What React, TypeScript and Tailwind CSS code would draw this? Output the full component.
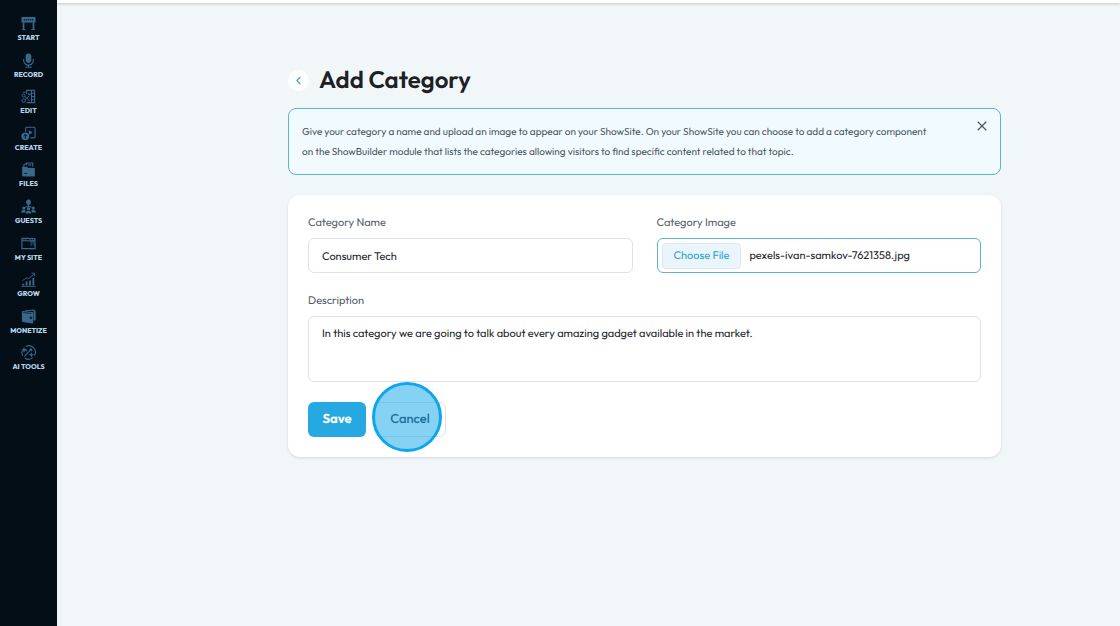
import { useState } from "react";
import type { ReactNode } from "react";
import { ChevronLeft, X } from "lucide-react";

type NavItem = { label: string; icon: ReactNode };

const navItems: NavItem[] = [
  {
    label: "START",
    icon: (
      <>
        <path fill="currentColor" stroke="none" d="M.5 1h15v6H.5z" />
        <path stroke="#0b2233" strokeWidth="1.4" strokeDasharray="1.4 .8" d="M3 4h10" />
        <path strokeWidth="1.8" d="M2.7 7v7M13.3 7v7" />
        <path d="M1 14.5h4M11 14.5h4" />
      </>
    ),
  },
  {
    label: "RECORD",
    icon: (
      <>
        <rect x="5" y="0.5" width="6" height="10" rx="3" fill="currentColor" stroke="none" />
        <path strokeWidth="1.2" d="M2.8 6.5v1.3a5.2 5.2 0 0 0 10.4 0V6.5M8 13v2M4.5 15.2h7" />
      </>
    ),
  },
  {
    label: "EDIT",
    icon: (
      <>
        <path strokeWidth="1.2" d="M6 5V1.5h8.5v13H7M11.2 1.5v13M11.5 4.5h3M11.5 8h3M11.5 11.5h3M7.5 5.5h4" />
        <circle cx="2.8" cy="7" r="1.6" />
        <circle cx="2.8" cy="12.5" r="1.8" />
        <path d="m4 8 5 4.5M4.2 11.5 9 7.2M2 3.5h3M6 14.5h3" />
      </>
    ),
  },
  {
    label: "CREATE",
    icon: (
      <>
        <path strokeWidth="1.2" d="M5 6V2.5c0-.8.4-1.2 1.2-1.2h7.6c.8 0 1.2.4 1.2 1.2v9c0 .8-.4 1.2-1.2 1.2H10" />
        <path fill="currentColor" stroke="none" d="m8.3 4.2 4.2 2.6-4.2 2.6z" />
        <circle cx="4.6" cy="11" r="4.2" fill="currentColor" stroke="none" />
        <path stroke="#030e17" d="M4.6 13.3V9M2.9 10.6 4.6 9l1.7 1.6" />
      </>
    ),
  },
  {
    label: "FILES",
    icon: (
      <>
        <path strokeWidth="1.2" d="M3 5V3.2L6 1h6.5v4M6 1v2.5M8 3h3" />
        <path fill="currentColor" stroke="none" d="M1.2 5h5l1.5 1.3h7.1v8.2a1 1 0 0 1-1 1H2.2a1 1 0 0 1-1-1z" />
        <path stroke="#0b2233" d="M3.5 12.2h3.2M8 5.4h5" />
      </>
    ),
  },
  {
    label: "GUESTS",
    icon: (
      <>
        <rect x="5.6" y="0.5" width="4.8" height="5.8" rx="2" fill="currentColor" stroke="none" />
        <path d="M8 6v3M8 7.5 4 9M8 7.5 12 9" />
        <g fill="currentColor" stroke="none">
          <circle cx="3" cy="9.6" r="1.7" />
          <circle cx="13" cy="9.6" r="1.7" />
          <circle cx="8" cy="10.4" r="1.8" />
          <path d="M.2 14.4c0-2 1.2-2.9 2.8-2.9 1.2 0 1.8.5 2.1 1.2l-.7 1.7zM15.8 14.4c0-2-1.2-2.9-2.8-2.9-1.2 0-1.8.5-2.1 1.2l.7 1.7zM5 15.5c0-2 1.2-3 3-3s3 1 3 3z" />
        </g>
      </>
    ),
  },
  {
    label: "MY SITE",
    icon: (
      <>
        <path strokeWidth="1.2" d="M9 2.5H1v11h14v-3M1.2 5h7.5M2.7 3.8h.6M4.5 3.8h.6" />
        <path fill="currentColor" stroke="none" fillRule="evenodd" d="M9 2h6.5v4H9zM10 3.2v1.3h1.5V3.2zM12.5 3.2v1.3H14V3.2z" />
        <path d="M10 7.5h5.3M10 9.5h2M13.3 9.5h2M15 6v5" />
      </>
    ),
  },
  {
    label: "GROW",
    icon: (
      <>
        <path d="M.5 15.3h15M1.5 9.2 6 6.2l2.2.8 6-5M11.2 1.3h3.3v3.2" />
        <path strokeWidth="2" d="M2.5 14.5v-2M6 14.5V10M9.6 14.5V9M13.2 14.5V6.5" />
      </>
    ),
  },
  {
    label: "MONETIZE",
    icon: (
      <>
        <path strokeWidth="1.2" d="M4 2.3 13.3 1c.9 0 1.5.5 1.5 1.4v9.2" />
        <path fill="currentColor" stroke="none" d="M1 2.2 13 3.4v11.2c0 .6-.4.9-1 .8l-9.7-1.6C1.4 13.6 1 13 1 12.2zM13.5 2.5h1.8v9.7h-1.8z" />
        <path stroke="#0b2233" d="m2.5 3.8 8.5 1" />
        <circle cx="10.5" cy="9.4" r="1.4" fill="#0b2233" stroke="none" />
      </>
    ),
  },
  {
    label: "AI TOOLS",
    icon: (
      <>
        <path strokeWidth="1.2" d="M5 1.6a7 7 0 0 1 9.4 9.6M12.5 13.5A7 7 0 0 1 4 13.8M1.8 11.5a7 7 0 0 1-.5-5.2" />
        <path strokeWidth="1.2" d="m3.5 12.5 7.5-8M8.8 4.3h2.5v2.4M4.5 4.5l2 2" />
        <path fill="currentColor" stroke="none" d="m3.2 2 .9 2.2 2.2.9-2.2.9-.9 2.2-.9-2.2L.1 5.1l2.2-.9zM11 7.6l.9 1.9 1.9.9-1.9.9-.9 1.9-.9-1.9-1.9-.9 1.9-.9z" />
      </>
    ),
  },
];

function Sidebar() {
  return (
    <aside className="w-[57px] shrink-0 bg-[#030e17] pt-4">
      <nav aria-label="Main" className="grid h-[366px] auto-rows-fr">
        {navItems.map(({ label, icon }) => (
          <a key={label} href="#" className="flex flex-col items-center gap-[3px]">
            <svg
              viewBox="0 0 16 16"
              fill="none"
              stroke="currentColor"
              strokeWidth="1"
              className="size-[15px] text-[#39688b]"
              aria-hidden="true"
            >
              {icon}
            </svg>
            <span className="text-[7px] leading-[8px] font-extrabold whitespace-nowrap text-[#b5d3e8]">{label}</span>
          </a>
        ))}
      </nav>
    </aside>
  );
}

function Notice() {
  const [open, setOpen] = useState(true);
  if (!open) return null;
  return (
    <div className="mt-3 flex items-start justify-between rounded-lg border border-[#5bb5cb] bg-[#f1fbff] pt-[13px] pr-[10px] pb-3 pl-[13px]">
      <p className="max-w-[630px] text-[10px] leading-5 text-[#4c565e]">
        Give your category a name and upload an image to appear on your ShowSite. On your ShowSite you can choose to
        add a category component on the ShowBuilder module that lists the categories allowing visitors to find specific
        content related to that topic.
      </p>
      <button type="button" aria-label="Close" onClick={() => setOpen(false)} className="-mt-2 py-1 text-[#4c565e]">
        <X className="size-4" strokeWidth={1.75} />
      </button>
    </div>
  );
}

const labelClass = "mb-2 block text-[11px] leading-[15px] text-[#566069]";

export default function App() {
  const [name, setName] = useState("Consumer Tech");
  const [description, setDescription] = useState(
    "In this category we are going to talk about every amazing gadget available in the market."
  );
  const [fileName, setFileName] = useState("pexels-ivan-samkov-7621358.jpg");

  return (
    <div className="flex min-h-screen bg-[#f1f6f9] font-[Outfit,Lato,sans-serif] [text-rendering:geometricPrecision]">
      <Sidebar />
      <div className="flex min-w-0 flex-1 flex-col">
        <header className="h-[3px] bg-white shadow-[0_1px_3px_rgba(0,0,0,0.2)]" />
        <main className="pt-[61px] pl-28">
          <div className="mx-auto max-w-[713px]">
            <div className="flex h-8 items-center gap-2.5">
              <a
                href="#"
                aria-label="Back"
                className="flex size-[21px] items-center justify-center rounded-full bg-white text-[#3ba6cb]"
              >
                <ChevronLeft className="size-[13px]" strokeWidth={2} />
              </a>
              <h1 className="text-[24px] leading-8 font-semibold text-[#1d2125]">Add Category</h1>
            </div>

            <Notice />

            <form
              onSubmit={(e) => e.preventDefault()}
              className="mt-5 rounded-xl bg-white p-5 shadow-[0_1px_3px_rgba(0,0,0,0.12)]"
            >
              <div className="grid grid-cols-2 gap-6">
                <div>
                  <label htmlFor="name" className={labelClass}>
                    Category Name
                  </label>
                  <input
                    id="name"
                    type="text"
                    value={name}
                    onChange={(e) => setName(e.target.value)}
                    className="h-[35px] w-full rounded-md border border-[#dde2e5] px-[13px] text-[11px] text-[#212529] outline-none [text-rendering:geometricPrecision]"
                  />
                </div>
                <div>
                  <label htmlFor="image" className={labelClass}>
                    Category Image
                  </label>
                  <label
                    htmlFor="image"
                    className="flex h-[35px] items-center gap-2 rounded-md border border-[#5bb5cb] px-1 text-[11px] text-[#212529]"
                  >
                    <span className="flex h-[26px] items-center rounded border border-[#dfe8ed] bg-[#eaf5fb] px-[11px] text-[#27a3cf]">
                      Choose File
                    </span>
                    <span>{fileName}</span>
                  </label>
                  <input
                    id="image"
                    type="file"
                    className="sr-only"
                    onChange={(e) => setFileName(e.target.files?.[0]?.name ?? fileName)}
                  />
                </div>
              </div>

              <div className="mt-5">
                <label htmlFor="description" className={labelClass}>
                  Description
                </label>
                <textarea
                  id="description"
                  value={description}
                  onChange={(e) => setDescription(e.target.value)}
                  className="block h-[66px] w-full resize-none rounded-md border border-[#dde2e5] px-[13px] py-[7px] text-[11px] leading-[18px] text-[#212529] outline-none [text-rendering:geometricPrecision]"
                />
              </div>

              <div className="mt-5 flex gap-2">
                <button
                  type="submit"
                  className="h-[35px] w-[58px] rounded-md bg-[#26a9e0] text-[13px] font-bold text-white [text-rendering:geometricPrecision]"
                >
                  Save
                </button>
                <div className="relative">
                  <button
                    type="button"
                    className="h-[35px] w-[72px] rounded-md border border-[#dde2e5] bg-white text-[13px] font-medium text-[#2f3a42] [text-rendering:geometricPrecision]"
                  >
                    Cancel
                  </button>
                  <span className="pointer-events-none absolute -top-5 -left-0.5 size-[70px] rounded-full border-3 border-[#0ea5ea] bg-[#0ea5ea]/50" />
                </div>
              </div>
            </form>
          </div>
        </main>
      </div>
    </div>
  );
}
